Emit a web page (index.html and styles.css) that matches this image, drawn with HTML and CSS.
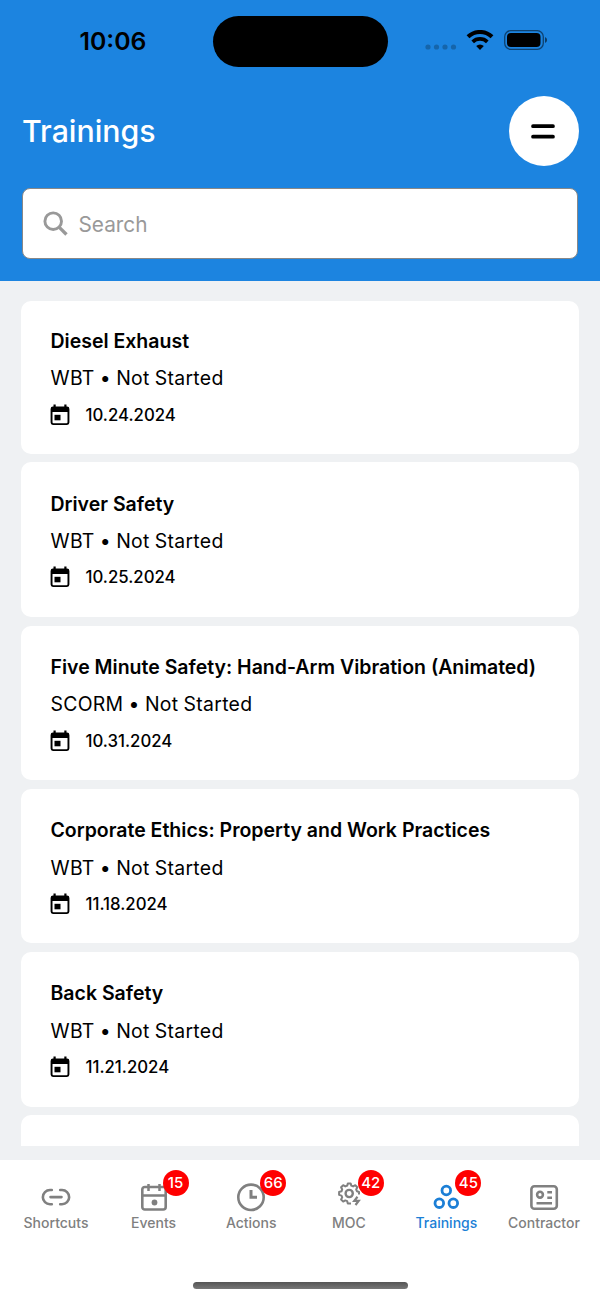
FILE: index.html
```html
<!DOCTYPE html>
<html lang="en">
<head>
    <meta charset="UTF-8">
    <meta name="viewport" content="width=device-width, initial-scale=1.0">
    <title>Trainings</title>
    <link rel="stylesheet" href="styles.css">
</head>
<body>
    <div class="header">
        <div class="status-bar">
            <span class="time">10:06</span>
            <div class="island"></div>
            <div class="status-icons">
                <svg class="dots" width="32" height="6" viewBox="0 0 32 6">
                    <circle cx="3" cy="3" r="2.6"/>
                    <circle cx="11.5" cy="3" r="2.6"/>
                    <circle cx="20" cy="3" r="2.6"/>
                    <circle cx="28.5" cy="3" r="2.6"/>
                </svg>
                <svg class="wifi" width="28" height="20" viewBox="0 0 28 20">
                    <path d="M2 6.8a17.2 17.2 0 0 1 24 0" fill="none" stroke="#000" stroke-width="4"/>
                    <path d="M6.7 11.8a10.5 10.5 0 0 1 14.6 0" fill="none" stroke="#000" stroke-width="3.7"/>
                    <path d="M14 20l-3.8-3.9a5.4 5.4 0 0 1 7.6 0z"/>
                </svg>
                <svg class="battery" width="44" height="20" viewBox="0 0 44 20">
                    <rect x="0.7" y="0.7" width="38.6" height="18.6" rx="6" fill="none" stroke="#000" stroke-opacity="0.5" stroke-width="1.3"/>
                    <rect x="3" y="3" width="33.5" height="14" rx="4"/>
                    <path d="M41 7a3.2 3.2 0 0 1 0 6z" fill-opacity="0.55"/>
                </svg>
            </div>
        </div>
        <div class="title-row">
            <h1>Trainings</h1>
            <button class="menu-button" aria-label="Menu">
                <svg width="24" height="16" viewBox="0 0 24 16">
                    <path d="M2 3.2h20M2 13.7h20" stroke="#000" stroke-width="3.7" stroke-linecap="round"/>
                </svg>
            </button>
        </div>
        <div class="search">
            <svg width="26" height="26" viewBox="0 0 26 26">
                <circle cx="10.2" cy="10.2" r="8.3" fill="none" stroke="#999" stroke-width="2.9"/>
                <path d="M16.3 16.3l7.2 7.2" stroke="#999" stroke-width="3.3"/>
            </svg>
            <span>Search</span>
        </div>
    </div>

    <svg class="defs" width="0" height="0">
        <symbol id="calendar" viewBox="0 0 20 22">
            <path fill-rule="evenodd" d="M3.5 0.5h2.2v2h8.6v-2h2.2v2h0.5a2.4 2.4 0 0 1 2.4 2.4v13.7a2.4 2.4 0 0 1-2.4 2.4h-14a2.4 2.4 0 0 1-2.4-2.4v-13.7a2.4 2.4 0 0 1 2.4-2.4h0.5zM2.5 8v10.3a1 1 0 0 0 1 1h13a1 1 0 0 0 1-1v-10.3z"/>
            <rect x="4.5" y="10.8" width="6" height="5.5"/>
        </symbol>
    </svg>

    <div class="list">
        <div class="card">
            <h2>Diesel Exhaust</h2>
            <p class="status">WBT • Not Started</p>
            <p class="date"><svg width="20" height="22"><use href="#calendar"/></svg><span>10.24.2024</span></p>
        </div>
        <div class="card">
            <h2>Driver Safety</h2>
            <p class="status">WBT • Not Started</p>
            <p class="date"><svg width="20" height="22"><use href="#calendar"/></svg><span>10.25.2024</span></p>
        </div>
        <div class="card">
            <h2>Five Minute Safety: Hand-Arm Vibration (Animated)</h2>
            <p class="status">SCORM • Not Started</p>
            <p class="date"><svg width="20" height="22"><use href="#calendar"/></svg><span>10.31.2024</span></p>
        </div>
        <div class="card">
            <h2>Corporate Ethics: Property and Work Practices</h2>
            <p class="status">WBT • Not Started</p>
            <p class="date"><svg width="20" height="22"><use href="#calendar"/></svg><span>11.18.2024</span></p>
        </div>
        <div class="card">
            <h2>Back Safety</h2>
            <p class="status">WBT • Not Started</p>
            <p class="date"><svg width="20" height="22"><use href="#calendar"/></svg><span>11.21.2024</span></p>
        </div>
        <div class="card"></div>
    </div>

    <div class="tab-bar">
        <div class="tabs">
            <div class="tab">
                <div class="icon">
                    <svg width="30" height="30" viewBox="0 0 30 30">
                        <path d="M10.8 8H9a7 7 0 0 0 0 14.3H10.8M19.2 8H21a7 7 0 0 1 0 14.3H19.2M9.5 15.1h11" stroke-width="2.6" stroke-linecap="round"/>
                    </svg>
                </div>
                <span>Shortcuts</span>
            </div>
            <div class="tab">
                <div class="icon">
                    <svg width="30" height="30" viewBox="0 0 30 30">
                        <rect x="3.3" y="5" width="23.4" height="22.5" rx="2.5" stroke-width="2.6"/>
                        <path d="M3.3 13.5h23.4M9.5 2v7M20.5 2v7" stroke-width="2.5"/>
                        <circle cx="15.5" cy="20.5" r="2.9" fill="currentColor" stroke="none"/>
                    </svg>
                    <span class="badge">15</span>
                </div>
                <span>Events</span>
            </div>
            <div class="tab">
                <div class="icon">
                    <svg width="30" height="30" viewBox="0 0 30 30">
                        <circle cx="15" cy="15.3" r="12.7" stroke-width="2.6"/>
                        <path d="M15 8v7.2h6" stroke-width="3"/>
                    </svg>
                    <span class="badge">66</span>
                </div>
                <span>Actions</span>
            </div>
            <div class="tab">
                <div class="icon">
                    <svg width="30" height="30" viewBox="0 0 30 30">
                        <path d="M17 21.6H13.8L13.2 19.2L11.3 18.4L9.2 19.6L7.1 17.5L8.2 15.4L7.5 13.6L5.1 12.9V10L7.5 9.3L8.2 7.5L7.1 5.3L9.2 3.2L11.3 4.4L13.2 3.6L13.8 1.6H16.7L17.3 3.6L19.1 4.4L21.3 3.2L23.3 5.3L22.2 7.5L23 9.3L25 10V12.5" stroke-width="2" stroke-linejoin="round"/>
                        <circle cx="15.2" cy="11.5" r="3.6" stroke-width="2.4"/>
                        <path d="M23.5 14.8l-3.2 4h4.4l-3.2 4.2" stroke-width="2.2"/>
                    </svg>
                    <span class="badge">42</span>
                </div>
                <span>MOC</span>
            </div>
            <div class="tab active">
                <div class="icon">
                    <svg width="30" height="30" viewBox="0 0 30 30">
                        <circle cx="15.3" cy="8.5" r="4.3" stroke-width="2.8"/>
                        <circle cx="8.3" cy="21.2" r="4.3" stroke-width="2.8"/>
                        <circle cx="22.3" cy="21.2" r="4.3" stroke-width="2.8"/>
                    </svg>
                    <span class="badge">45</span>
                </div>
                <span>Trainings</span>
            </div>
            <div class="tab">
                <div class="icon">
                    <svg width="30" height="30" viewBox="0 0 30 30">
                        <rect x="2.4" y="4.3" width="25.4" height="22.5" rx="3" stroke-width="2.6"/>
                        <circle cx="11" cy="12.7" r="2.9" stroke-width="2.6"/>
                        <path d="M18.3 10.2h4.7M18.3 15.7h4.7M7.5 21.2h15.5" stroke-width="2.5"/>
                    </svg>
                </div>
                <span>Contractor</span>
            </div>
        </div>
        <div class="home-indicator"></div>
    </div>
</body>
</html>
```
FILE: styles.css
```css
* {
    box-sizing: border-box;
}

body {
    font-family: Inter, "Liberation Sans", sans-serif;
    background-color: #eff1f3;
    display: flex;
    flex-direction: column;
    height: 1300px;
    margin: 0;
    overflow: hidden;
}

h1, h2, p {
    margin: 0;
}

.defs {
    display: block;
    flex: none;
}

.header {
    background-color: #1c84e0;
    height: 280.5px;
    flex: none;
    padding: 0 22px;
}

.status-bar {
    display: grid;
    grid-template-columns: 190.5px 175px 1fr;
    height: 96px;
    padding-top: 16px;
}

.time {
    font-size: 24.8px;
    font-weight: 600;
    line-height: 51px;
    padding-left: 57.5px;
}

.island {
    background-color: #000;
    border-radius: 26px;
    height: 51px;
}

.status-icons {
    display: flex;
    height: 51px;
    padding-left: 37.5px;
}

.dots {
    fill: #000;
    opacity: 0.23;
    margin-top: 28px;
}

.wifi {
    margin: 14px 0 0 9px;
}

.battery {
    margin: 14px 0 0 10px;
}

.title-row {
    display: flex;
    justify-content: space-between;
    align-items: center;
    height: 70px;
    margin-right: -1px;
}

h1 {
    color: white;
    font-size: 30.3px;
    font-weight: 500;
}

.menu-button {
    display: flex;
    justify-content: center;
    align-items: center;
    width: 70px;
    height: 70px;
    padding: 0;
    border: none;
    border-radius: 50%;
    background-color: white;
}

.menu-button svg {
    margin-right: 3px;
}

.search {
    display: flex;
    align-items: center;
    gap: 9.5px;
    height: 71px;
    margin-top: 22px;
    padding-left: 20px;
    border: 1px solid #888;
    border-radius: 8px;
    background-color: white;
    color: #999;
    font-size: 20.8px;
}

.search span {
    padding-top: 1px;
}

.list {
    display: flex;
    flex-direction: column;
    gap: 8.7px;
    height: 865.5px;
    padding: 20.3px 21px 0;
    overflow: hidden;
    flex: none;
}

.card {
    background-color: white;
    border-radius: 10px;
    height: 154.5px;
    padding: 28.3px 29px 0 29.5px;
    flex: none;
    color: #000;
}

/* the first card is a little shorter than the rest */
.card:first-child {
    height: 153px;
    padding-top: 27.1px;
}

.card h2 {
    font-size: 19.5px;
    font-weight: 600;
    line-height: 26px;
    white-space: nowrap;
}

.status {
    font-size: 19.4px;
    letter-spacing: 0.3px;
    word-spacing: -0.6px;
    line-height: 26px;
    margin-top: 11.5px;
}

.date {
    display: flex;
    align-items: center;
    gap: 16px;
    height: 24px;
    margin-top: 11.2px;
    font-size: 16.8px;
    font-weight: 500;
}

.date svg {
    margin-left: -1px;
}

.tab-bar {
    background-color: white;
    height: 140px;
    margin-top: 14px;
    flex: none;
}

.tabs {
    display: grid;
    grid-template-columns: repeat(6, 97.6px);
    justify-content: center;
    height: 121.5px;
    padding-top: 22px;
}

.tab {
    display: flex;
    flex-direction: column;
    align-items: center;
    color: #808080;
    font-size: 14px;
    font-weight: 500;
    line-height: 20px;
}

.tab.active {
    color: #1c7fd6;
}

.icon {
    position: relative;
    height: 31px;
}

.icon svg {
    display: block;
    fill: none;
    stroke: currentColor;
}

.badge {
    position: absolute;
    left: 24px;
    top: -12px;
    width: 26px;
    height: 26px;
    border-radius: 50%;
    background-color: #f00;
    color: white;
    font-size: 15px;
    line-height: 26px;
    text-align: center;
}

.home-indicator {
    width: 215px;
    height: 7px;
    margin: 0 auto;
    border-radius: 4px;
    background: linear-gradient(#555, #777);
}
```
